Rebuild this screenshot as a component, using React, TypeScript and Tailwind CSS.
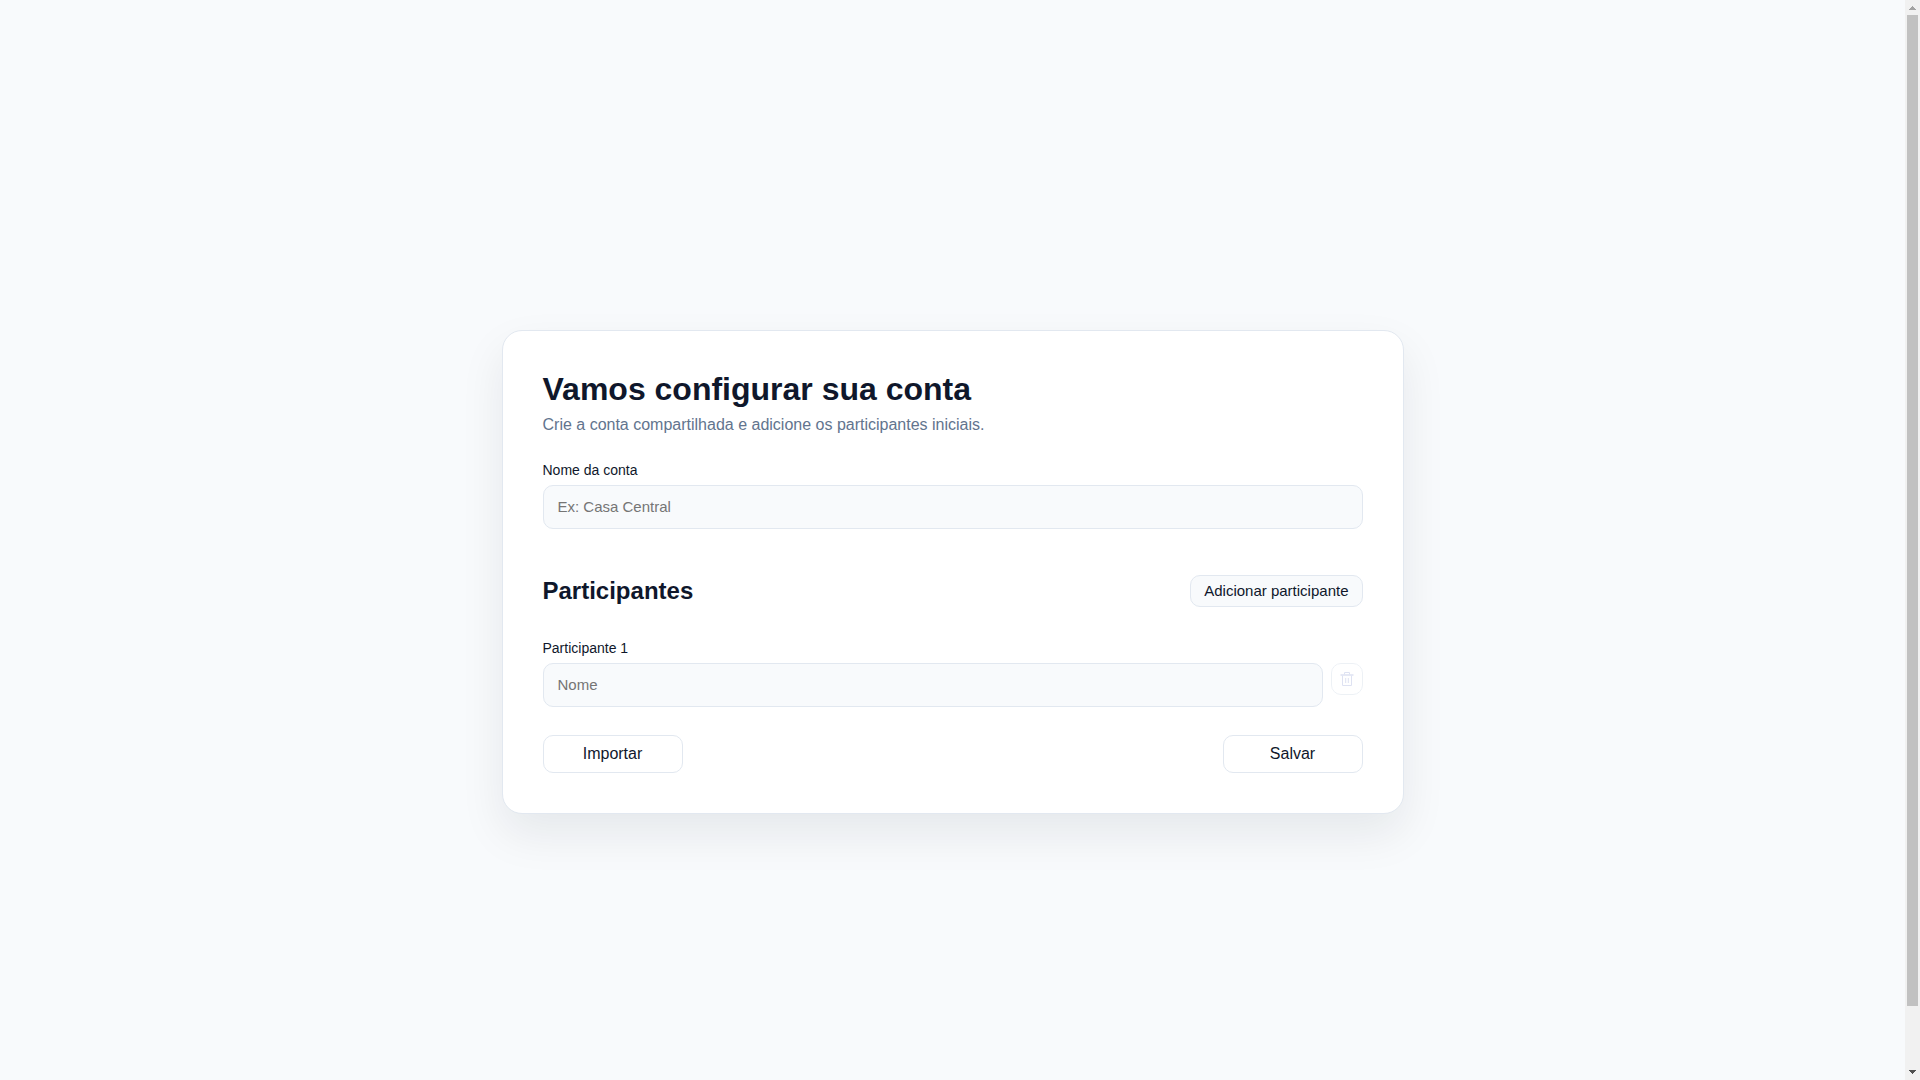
import { useState } from "react";

const inputClass =
  "block h-11 w-full rounded-[10px] border border-slate-200 bg-slate-50 px-3.5 pb-0.5 text-[15px] text-slate-900 placeholder:text-[#757575]";

const actionClass =
  "h-[38px] w-[140px] rounded-[10px] border border-slate-200 text-base";

function TrashIcon() {
  return (
    <svg viewBox="0 0 18 18" className="size-[18px]" fill="none" stroke="currentColor" aria-hidden="true">
      <path d="M2.500 5h13" strokeWidth="1.5" />
      <path d="M6.500 4.500v-2h5v2" />
      <path d="M4.500 5.500v10h9v-10" />
      <path d="M7.700 8v5M10.300 8v5" />
    </svg>
  );
}

function ScrollBar() {
  return (
    <div className="flex w-[15px] shrink-0 flex-col items-center bg-[#f1f1f1]" aria-hidden="true">
      <svg viewBox="0 0 15 15" className="size-[15px] shrink-0" fill="#a3a3a3" shapeRendering="crispEdges">
        <path d="M7 6h1v1h1v1h1v1h1v1H4V9h1V8h1V7h1z" />
      </svg>
      <div className="w-full grow px-0.5">
        <div className="h-[94.4%] w-[11px] bg-[#c1c1c1]" />
      </div>
      <svg viewBox="0 0 15 15" className="size-[15px] shrink-0" fill="#505050" shapeRendering="crispEdges">
        <path d="M4 5h7v1h-1v1H9v1H8v1H7V8H6V7H5V6H4z" />
      </svg>
    </div>
  );
}

export default function App() {
  const [participants, setParticipants] = useState([""]);

  return (
    <div className="flex h-screen overflow-hidden bg-slate-50 font-['Liberation_Sans',Arial,sans-serif] text-slate-900">
      <div className="min-w-0 flex-1 overflow-y-auto">
        <div className="box-content flex min-h-screen py-8">
          <main className="m-auto w-full max-w-[902px] rounded-[20px] border border-slate-200 bg-white p-10 shadow-[0_20px_45px_rgba(15,23,42,0.08)]">
            <header className="mb-7">
              <h1 className="mb-2 text-[32px] leading-[37px] font-bold">Vamos configurar sua conta</h1>
              <p className="text-base leading-[18px] text-slate-500">
                Crie a conta compartilhada e adicione os participantes iniciais.
              </p>
            </header>

            <form onSubmit={(e) => e.preventDefault()}>
              <label htmlFor="account" className="mb-1.5 block text-sm leading-[17px]">
                Nome da conta
              </label>
              <input id="account" type="text" placeholder="Ex: Casa Central" className={inputClass} />

              <div className="mt-[46px] mb-8 flex items-center justify-between">
                <h2 className="text-2xl leading-7 font-bold">Participantes</h2>
                <button
                  type="button"
                  onClick={() => setParticipants([...participants, ""])}
                  className="h-8 rounded-[10px] border border-slate-200 bg-slate-50 px-[13px] text-[15px]"
                >
                  Adicionar participante
                </button>
              </div>

              <div className="flex flex-col gap-4">
                {participants.map((name, i) => (
                  <div key={i}>
                    <label htmlFor={`participant-${i}`} className="mb-1.5 block text-sm leading-[18px]">
                      Participante {i + 1}
                    </label>
                    <div className="flex items-start gap-2">
                      <input
                        id={`participant-${i}`}
                        type="text"
                        placeholder="Nome"
                        value={name}
                        onChange={(e) =>
                          setParticipants(participants.map((p, n) => (n === i ? e.target.value : p)))
                        }
                        className={inputClass}
                      />
                      <button
                        type="button"
                        aria-label="Remover participante"
                        disabled={participants.length === 1}
                        onClick={() => setParticipants(participants.filter((_, n) => n !== i))}
                        className="flex size-8 shrink-0 items-center justify-center rounded-[10px] border border-slate-200 text-[#c9cfea] disabled:opacity-60"
                      >
                        <TrashIcon />
                      </button>
                    </div>
                  </div>
                ))}
              </div>

              <div className="mt-7 flex justify-between">
                <button type="button" className={actionClass}>
                  Importar
                </button>
                <button type="submit" className={actionClass}>
                  Salvar
                </button>
              </div>
            </form>
          </main>
        </div>
      </div>
      <ScrollBar />
    </div>
  );
}
